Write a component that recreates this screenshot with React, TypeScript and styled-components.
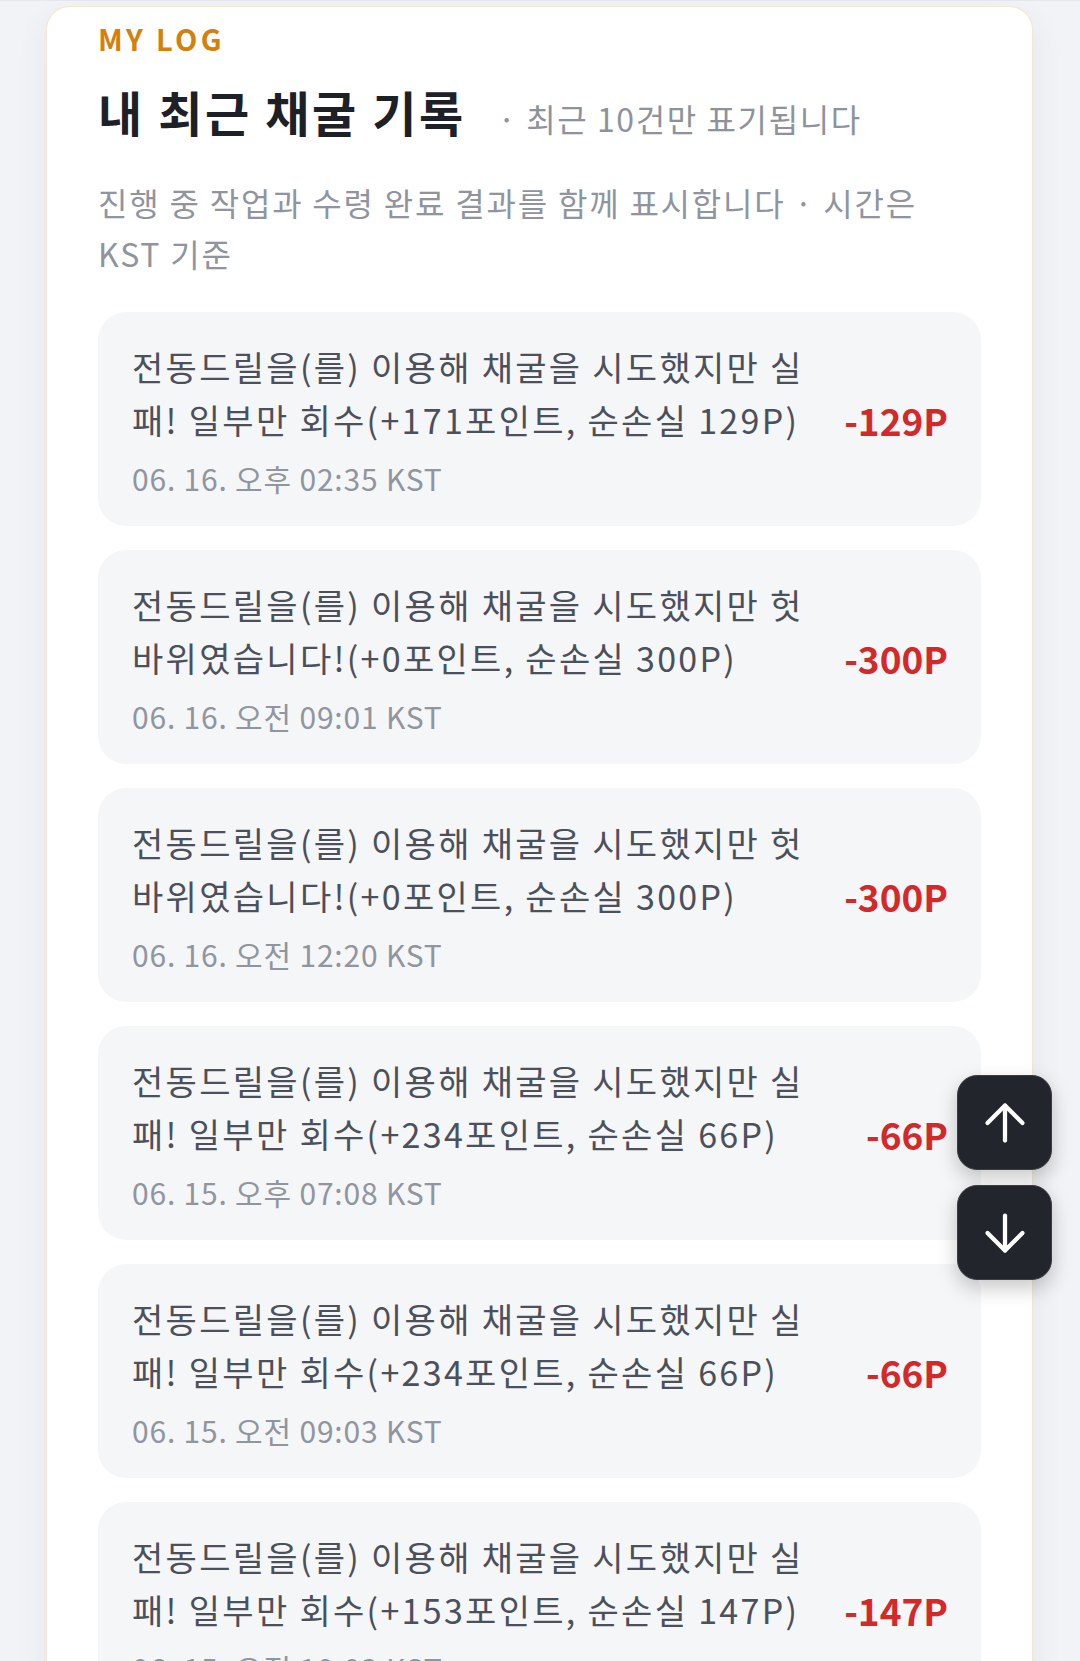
import React from 'react';
import styled, { createGlobalStyle } from 'styled-components';
import { ArrowUp, ArrowDown } from 'lucide-react';

const GlobalStyle = createGlobalStyle`
  html, body {
    margin: 0;
    padding: 0;
    background: #f2f3f6;
  }
  body {
    font-family: "Noto Sans CJK KR", "Noto Sans", sans-serif;
    -webkit-font-smoothing: antialiased;
  }
  * { box-sizing: border-box; }
`;

const Page = styled.main`
  padding-top: 5px;
  border-top: 1px solid #e7e8eb;
`;

const Card = styled.section`
  margin: 0 47px 0 46px;
  background: #ffffff;
  border: 1px solid #f3e7d3;
  border-bottom: none;
  border-radius: 24px 24px 0 0;
  padding: 14px 51px 60px;
  box-shadow: 0 10px 34px rgba(30, 40, 60, 0.06);
`;

const Eyebrow = styled.div`
  font-size: 29px;
  font-weight: 700;
  letter-spacing: 3.3px;
  line-height: 1.2;
  color: #d4800c;
`;

const TitleRow = styled.div`
  display: flex;
  align-items: baseline;
  gap: 32px;
  margin-top: 27px;
`;

const Title = styled.h2`
  margin: 0;
  font-size: 48px;
  font-weight: 700;
  line-height: 1.2;
  letter-spacing: 2.6px;
  color: #1d2026;
`;

const Note = styled.span`
  font-size: 32px;
  font-weight: 400;
  letter-spacing: 1.6px;
  color: #8d929c;
`;

const Description = styled.p`
  margin: 36px 0 0;
  max-width: 840px;
  font-size: 32px;
  line-height: 51px;
  letter-spacing: 1.8px;
  color: #8f949e;
`;

const List = styled.ul`
  list-style: none;
  margin: 33px 0 0;
  padding: 0;
  display: flex;
  flex-direction: column;
  gap: 24px;
`;

const Item = styled.li`
  display: flex;
  align-items: center;
  gap: 40px;
  background: #f5f6f8;
  border-radius: 28px;
  padding: 28px 33px 26px 34px;
`;

const Body = styled.div`
  flex: 1;
  min-width: 0;
`;

const Message = styled.div`
  font-size: 34px;
  line-height: 53px;
  letter-spacing: 2.3px;
  color: #4b505a;
`;

const Time = styled.div`
  margin-top: 10px;
  font-size: 30px;
  line-height: 44px;
  letter-spacing: 0.8px;
  color: #90959e;
`;

const Amount = styled.div<{ $negative: boolean }>`
  flex-shrink: 0;
  font-size: 37px;
  font-weight: 700;
  color: ${(p) => (p.$negative ? '#d3292b' : '#16a34a')};
`;

const FloatStack = styled.div`
  position: fixed;
  right: 28px;
  top: 1075px;
  display: flex;
  flex-direction: column;
  gap: 15px;
`;

const FloatButton = styled.button`
  width: 95px;
  height: 95px;
  border-radius: 20px;
  border: 1px solid #3a3d44;
  background: #22252b;
  color: #ffffff;
  display: flex;
  align-items: center;
  justify-content: center;
  padding: 0;
  box-shadow: 0 8px 20px rgba(0, 0, 0, 0.22);
  cursor: pointer;
`;

type Log = { text: string; time: string; amount: number };

const logs: Log[] = [
  { text: '전동드릴을(를) 이용해 채굴을 시도했지만 실패! 일부만 회수(+171포인트, 순손실 129P)', time: '06. 16. 오후 02:35 KST', amount: -129 },
  { text: '전동드릴을(를) 이용해 채굴을 시도했지만 헛바위였습니다!(+0포인트, 순손실 300P)', time: '06. 16. 오전 09:01 KST', amount: -300 },
  { text: '전동드릴을(를) 이용해 채굴을 시도했지만 헛바위였습니다!(+0포인트, 순손실 300P)', time: '06. 16. 오전 12:20 KST', amount: -300 },
  { text: '전동드릴을(를) 이용해 채굴을 시도했지만 실패! 일부만 회수(+234포인트, 순손실 66P)', time: '06. 15. 오후 07:08 KST', amount: -66 },
  { text: '전동드릴을(를) 이용해 채굴을 시도했지만 실패! 일부만 회수(+234포인트, 순손실 66P)', time: '06. 15. 오전 09:03 KST', amount: -66 },
  { text: '전동드릴을(를) 이용해 채굴을 시도했지만 실패! 일부만 회수(+153포인트, 순손실 147P)', time: '06. 15. 오전 10:03 KST', amount: -147 },
];

export default function App() {
  return (
    <>
      <GlobalStyle />
      <Page>
        <Card>
          <Eyebrow>MY LOG</Eyebrow>
          <TitleRow>
            <Title>내 최근 채굴 기록</Title>
            <Note>· 최근 10건만 표기됩니다</Note>
          </TitleRow>
          <Description>진행 중 작업과 수령 완료 결과를 함께 표시합니다 · 시간은 KST 기준</Description>
          <List>
            {logs.map((log, i) => (
              <Item key={i}>
                <Body>
                  <Message>{log.text}</Message>
                  <Time>{log.time}</Time>
                </Body>
                <Amount $negative={log.amount < 0}>
                  {log.amount < 0 ? `${log.amount}P` : `+${log.amount}P`}
                </Amount>
              </Item>
            ))}
          </List>
        </Card>
      </Page>
      <FloatStack>
        <FloatButton aria-label="맨 위로">
          <ArrowUp size={60} strokeWidth={1.7} />
        </FloatButton>
        <FloatButton aria-label="맨 아래로">
          <ArrowDown size={60} strokeWidth={1.7} />
        </FloatButton>
      </FloatStack>
    </>
  );
}
